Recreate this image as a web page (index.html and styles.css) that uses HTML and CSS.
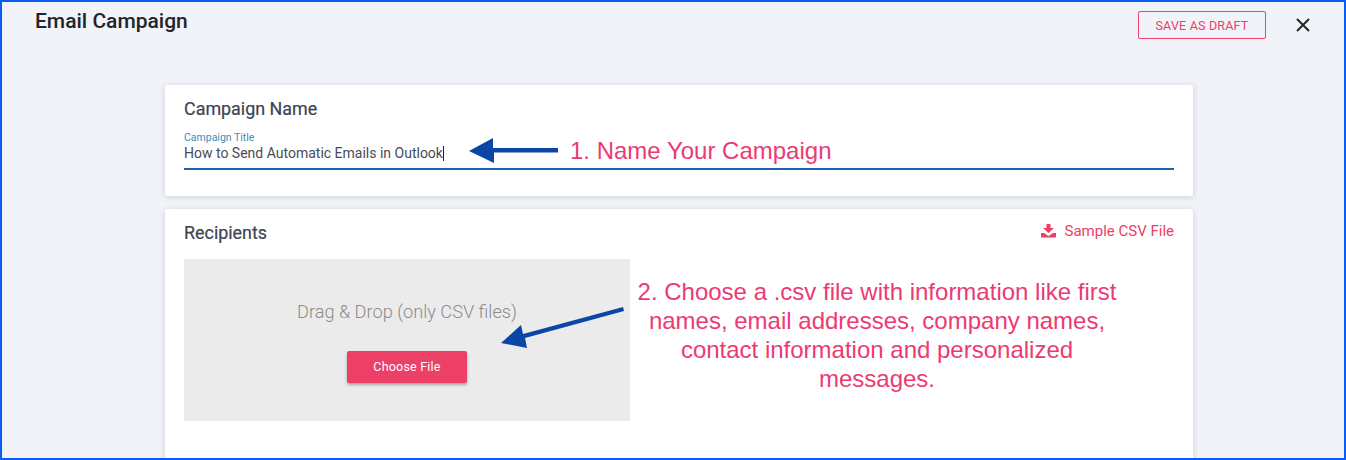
FILE: index.html
```html
<!DOCTYPE html>
<html lang="en">
<head>
  <meta charset="UTF-8" />
  <title>Email Campaign</title>
  <link rel="stylesheet" href="styles.css">
</head>
<body>
<div class="frame">
  <div class="topbar">
    <h1>Email Campaign</h1>
    <button class="btn-draft">SAVE AS DRAFT</button>
    <svg class="close" width="16" height="16" viewBox="0 0 16 16"><path d="M2 2L14 14M14 2L2 14" stroke="#212529" stroke-width="2" fill="none"/></svg>
  </div>

  <!-- campaign name -->
  <div class="card card-name">
    <h2>Campaign Name</h2>
    <div class="field">
      <label>Campaign Title</label>
      <div class="value">How to Send Automatic Emails in Outlook<span class="caret"></span></div>
      <svg class="arrow-name" width="92" height="30" viewBox="0 0 92 30"><path d="M0 16L24 3V13H89V17.500H25V28Z" fill="#0b45a5"/></svg>
      <span class="note-name">1. Name Your Campaign</span>
    </div>
  </div>

  <!-- recipients -->
  <div class="card card-recipients">
    <div class="rec-head">
      <h2>Recipients</h2>
      <a class="sample">
        <svg width="15" height="14" viewBox="0 0 15 14"><path d="M5.500 0H9.500V4H13L7.500 9L2 4H5.500ZM0 9H3L7.500 12L12 9H15V13.500H0Z" fill="#ec4067"/></svg>
        Sample CSV File
      </a>
    </div>
    <div class="rec-body">
      <div class="dropzone">
        <p>Drag &amp; Drop (only CSV files)</p>
        <button class="btn-choose">Choose File</button>
      </div>
      <p class="note-csv">2. Choose a .csv file with information like first<br>names, email addresses, company names,<br>contact information and personalized<br>messages.</p>
      <svg class="arrow-csv" width="126" height="46" viewBox="0 0 126 46"><path d="M2 38L22 20L24 29L124 2L125 6L26 33L28 43Z" fill="#0b45a5"/></svg>
    </div>
  </div>
</div>
</body>
</html>
```

FILE: styles.css
```css
html,body{margin:0;padding:0;}
.frame{box-sizing:border-box;width:1346px;height:460px;border:2px solid #0a5cf5;background:#f1f3f8;overflow:hidden;font-family:Roboto,sans-serif;color:#343a46;}

.topbar{display:flex;align-items:flex-start;height:83px;padding:9px 31px 9px 33px;box-sizing:border-box;}
.topbar h1{margin:0;flex:1;font-size:21px;line-height:20px;font-weight:500;color:#212529;}
.btn-draft{box-sizing:border-box;width:128px;height:28px;padding:0;border:1px solid #ec4067;border-radius:2px;background:none;color:#ec4067;font-family:Roboto,sans-serif;font-size:12.500px;letter-spacing:.2px;}
.close{margin:6px 2px 0 29px;}

.card{width:1028px;margin:0 0 0 163px;box-sizing:border-box;background:#fff;border-radius:2px;box-shadow:0 1px 6px rgba(40,45,60,.18);padding:14px 19px;}
.card h2{margin:0;font-size:17.900px;line-height:19px;font-weight:400;-webkit-text-stroke:.2px #3d4450;color:#3d4450;}
.card-name{height:111px;margin-bottom:13px;}

.field{position:relative;margin-top:14px;height:36px;border-bottom:2px solid #1c62b9;}
.field label{display:block;font-size:10.500px;line-height:11px;color:#3f8db5;}
.value{font-size:14px;line-height:19px;margin-top:1px;color:#484c54;}
.caret{display:inline-block;width:1px;height:15px;background:#222;vertical-align:-3px;}
.arrow-name{position:absolute;left:285px;top:3px;}
.note-name{position:absolute;left:386px;top:5px;font-family:"Liberation Sans",sans-serif;font-size:24px;line-height:28px;color:#ec3a72;white-space:nowrap;}

.card-recipients{height:260px;padding-top:14px;}
.rec-head{display:flex;justify-content:space-between;align-items:flex-start;height:36px;}
.sample{display:flex;align-items:center;gap:9px;font-size:15px;line-height:16px;color:#ec4067;}

.rec-body{position:relative;display:flex;}
.dropzone{width:446px;height:162px;background:#ebebeb;text-align:center;}
.dropzone p{margin:42px 0 0;font-size:18.200px;line-height:22px;font-weight:300;color:#8b8b8b;}
.btn-choose{display:block;margin:28px auto 0;width:120px;height:32px;padding:0 0 2px;border:none;border-radius:2px;background:#ec4067;color:#fff;font-family:Roboto,sans-serif;font-size:12.500px;letter-spacing:.2px;box-shadow:0 2px 3px rgba(0,0,0,.3);}
.note-csv{width:494px;flex:none;margin:18px 0 0;text-align:center;font-family:"Liberation Sans",sans-serif;font-size:24px;line-height:29px;color:#ec3a72;}
.arrow-csv{position:absolute;left:315px;top:46px;}
```
